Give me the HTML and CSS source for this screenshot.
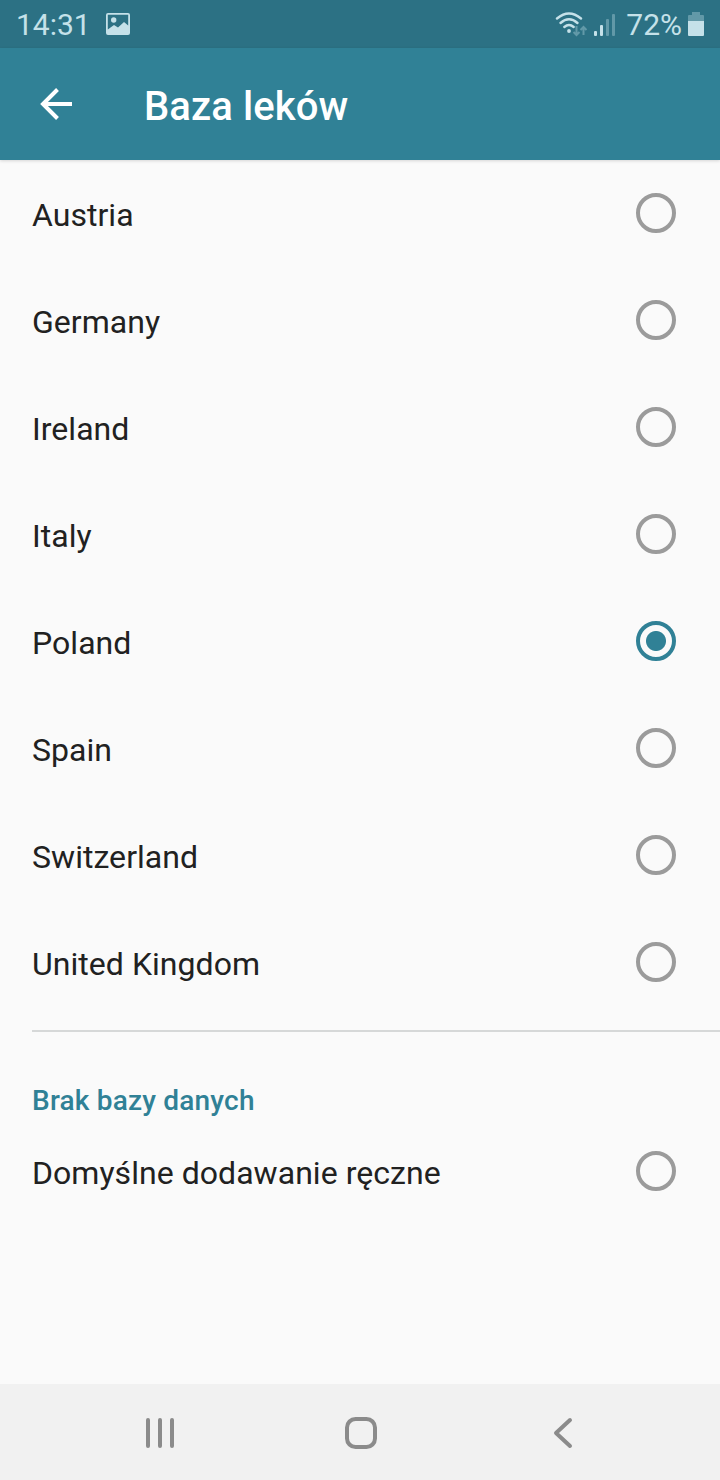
FILE: index.html
```html
<!DOCTYPE html>
<html lang="pl">
<head>
    <meta charset="UTF-8">
    <meta name="viewport" content="width=device-width, initial-scale=1.0">
    <title>Baza leków</title>
    <link rel="stylesheet" href="styles.css">
</head>
<body>
    <div class="status-bar">
        <span class="clock">14:31</span>
        <svg class="icon-image" width="24" height="24" viewBox="0 0 24 24">
            <path fill-rule="evenodd" d="M2 1h20a2 2 0 0 1 2 2v18a2 2 0 0 1-2 2H2a2 2 0 0 1-2-2V3a2 2 0 0 1 2-2zM1.800 2.800V17.500l6.200-4.500 4 2.500 6-5.500 4.200 3.500V2.800z"/>
            <circle cx="7.700" cy="8" r="2.700"/>
        </svg>
        <svg class="icon-wifi" width="34" height="28" viewBox="0 0 34 28">
            <g fill="none" stroke-width="2.400" stroke-linecap="round">
                <path d="M2 8.500Q14-1.500 26 8.500"/>
                <path d="M5.500 13Q14 5.500 22.500 13"/>
                <path d="M9.300 17Q14 13 18.700 17"/>
            </g>
            <circle cx="14" cy="21" r="1.900"/>
            <path class="dim-stroke" d="M21.500 16v9M18.500 22l3 3 3-3M28.500 25v-8M25.500 20l3-3 3 3" fill="none" stroke-width="2"/>
        </svg>
        <svg class="icon-signal" width="22" height="24" viewBox="0 0 22 24">
            <rect x="0" y="18" width="3" height="5" rx="1"/>
            <rect x="6" y="12" width="3" height="11" rx="1"/>
            <rect class="dim" x="12" y="6" width="3" height="17" rx="1"/>
            <rect class="dim" x="18" y="1" width="3" height="22" rx="1"/>
        </svg>
        <span class="percent">72%</span>
        <svg class="icon-battery" width="16" height="24" viewBox="0 0 16 24">
            <path class="dim" d="M4 0h8v3h3a1 1 0 0 1 1 1v5H0V4a1 1 0 0 1 1-1h3z"/>
            <path d="M0 9h16v14a1 1 0 0 1-1 1H1a1 1 0 0 1-1-1z"/>
        </svg>
    </div>

    <header class="app-bar">
        <svg class="icon-back" width="32" height="32" viewBox="0 0 32 32">
            <path d="M32 16H3M17.500 1.500L3 16l14.500 14.500" fill="none" stroke="#fff" stroke-width="4"/>
        </svg>
        <h1>Baza leków</h1>
    </header>

    <main>
        <div class="countries">
            <label class="option"><span>Austria</span><input type="radio" name="base"></label>
            <label class="option"><span>Germany</span><input type="radio" name="base"></label>
            <label class="option"><span>Ireland</span><input type="radio" name="base"></label>
            <label class="option"><span>Italy</span><input type="radio" name="base"></label>
            <label class="option"><span>Poland</span><input type="radio" name="base" checked></label>
            <label class="option"><span>Spain</span><input type="radio" name="base"></label>
            <label class="option"><span>Switzerland</span><input type="radio" name="base"></label>
            <label class="option"><span>United Kingdom</span><input type="radio" name="base"></label>
        </div>
        <div class="no-base">
            <h2>Brak bazy danych</h2>
            <label class="option"><span>Domyślne dodawanie ręczne</span><input type="radio" name="base"></label>
        </div>
    </main>

    <nav class="nav-bar">
        <svg width="32" height="32" viewBox="0 0 32 32">
            <path d="M4 3v26M16 3v26M28 3v26"/>
        </svg>
        <svg width="32" height="32" viewBox="0 0 32 32">
            <rect x="2" y="2" width="28" height="28" rx="8.500"/>
        </svg>
        <svg width="32" height="32" viewBox="0 0 32 32">
            <path d="M24 3L10 16l14 13"/>
        </svg>
    </nav>
</body>
</html>
```

FILE: styles.css
```css
body {
    font-family: Roboto, sans-serif;
    margin: 0;
    height: 1480px;
    display: flex;
    flex-direction: column;
    background-color: #fafafa;
    color: #212121;
}

/* Status bar */
.status-bar {
    height: 48px;
    box-sizing: border-box;
    padding: 0 16px;
    display: flex;
    align-items: center;
    background-color: #2c7184;
    color: #c5e1e9;
    fill: #c5e1e9;
    font-size: 30px;
}
.clock {
    width: 90px;
}
.icon-wifi {
    margin-left: auto;
    stroke: #c5e1e9;
}
.icon-wifi circle {
    stroke: none;
}
.icon-signal {
    margin: 2px 10px 0 5px;
}
.percent {
    margin-right: 6px;
}
.dim {
    fill: #6299a8;
}
.dim-stroke {
    stroke: #6299a8;
}

/* App bar */
.app-bar {
    height: 112px;
    box-sizing: border-box;
    padding-left: 40px;
    display: flex;
    align-items: center;
    background-color: #308196;
    color: #fff;
    box-shadow: 0 1px 3px rgba(0, 0, 0, 0.15);
}
.app-bar h1 {
    margin: 4px 0 0 72px;
    font-size: 40px;
    font-weight: 500;
    letter-spacing: 0.1px;
}

/* Options */
main {
    flex: 1;
    padding-left: 32px;
}
.countries {
    padding-bottom: 14px;
    border-bottom: 2px solid #d6d8d8;
}
.option {
    height: 107px;
    padding-right: 44px;
    display: flex;
    align-items: center;
    justify-content: space-between;
    font-size: 32px;
    letter-spacing: 0.04px;
}
.option span {
    padding-top: 3px;
}
.option input {
    appearance: none;
    box-sizing: border-box;
    width: 40px;
    height: 40px;
    margin: 0 0 1px;
    border: 4px solid #9b9b9b;
    border-radius: 50%;
}
.option input:checked {
    border-color: #308196;
    background: radial-gradient(circle, #308196 9.500px, transparent 10.500px);
}
.no-base h2 {
    margin: 0;
    padding-top: 52px;
    line-height: 34px;
    font-size: 28px;
    font-weight: 500;
    letter-spacing: 0.2px;
    color: #308196;
}

/* Navigation */
.nav-bar {
    height: 96px;
    box-sizing: border-box;
    padding: 2px 142px 0 144px;
    display: flex;
    align-items: center;
    justify-content: space-between;
    background-color: #f1f1f1;
    fill: none;
    stroke: #8b8b8b;
    stroke-width: 4;
    stroke-linecap: round;
    stroke-linejoin: round;
}
```
